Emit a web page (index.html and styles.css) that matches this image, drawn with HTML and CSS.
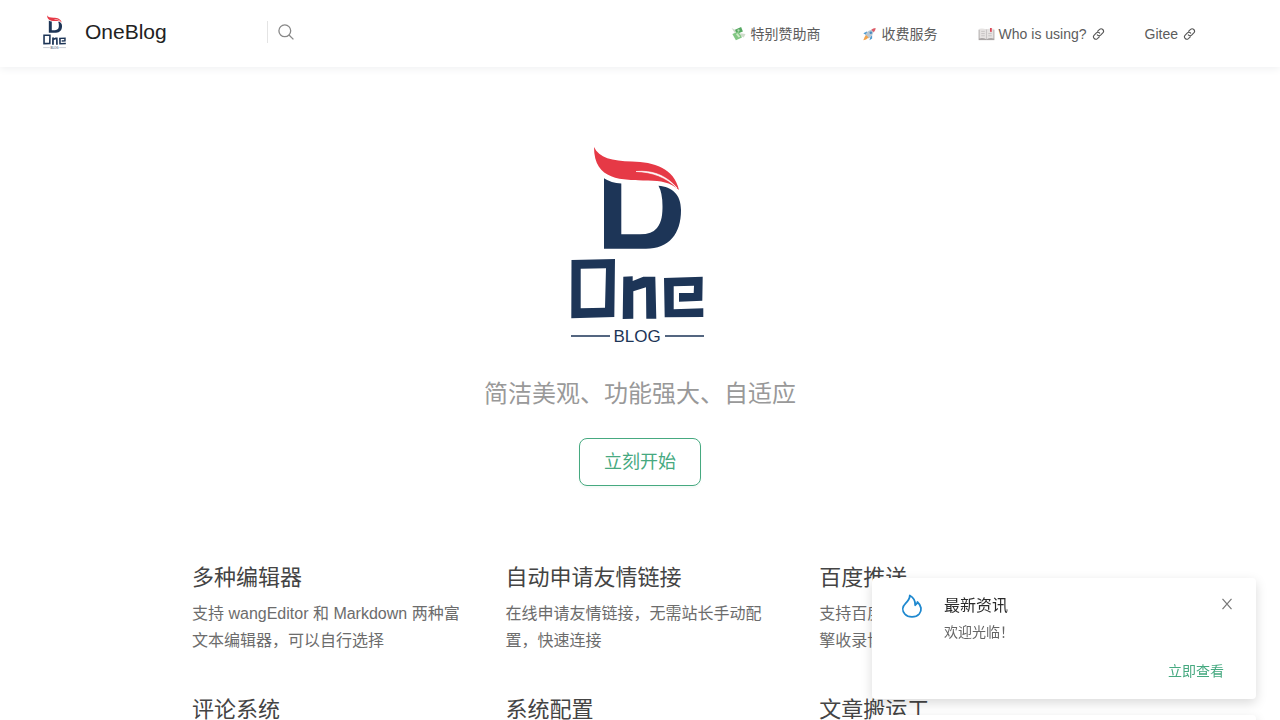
FILE: index.html
```html
<!DOCTYPE html>
<html lang="zh-CN">
   <head>
      <meta charset="UTF-8">
      <meta name="viewport" content="width=device-width, initial-scale=1.0">
      <title>OneBlog</title>
      <link rel="stylesheet" href="styles.css">
   </head>
   <body>
      <!-- Shared icons -->
      <svg class="sprite" aria-hidden="true">
         <symbol id="link" viewBox="0 0 12 12">
            <path fill="none" stroke="#555" stroke-width="1.100" stroke-linecap="round" d="M5.200 3.200L7.100 1.400C9.200-.5 12.300 2.500 10.500 4.700L8.400 6.900C7.300 8 5.700 7.900 4.800 6.900M6.800 8.800L4.900 10.600C2.800 12.500-.3 9.500 1.500 7.300L3.600 5.100C4.700 4 6.300 4.100 7.200 5.100"/>
         </symbol>
      </svg>

      <header class="navbar">
         <a class="brand" href="#">
            <svg class="brand-logo" viewBox="0 0 160 210"><use href="#logo"/></svg>
            <span>OneBlog</span>
         </a>
         <button class="search" aria-label="搜索">
            <svg width="16" height="16" viewBox="0 0 16 16" fill="none" stroke="#888" stroke-width="1.300"><circle cx="6.800" cy="6.800" r="5.900"/><path d="M11 11L15.400 15.400"/></svg>
         </button>
         <nav class="nav">
            <a href="#">
               <svg class="emoji" viewBox="0 0 16 16">
                  <path fill="#cfdccb" d="M0 1L6 4L4 7ZM10 7L16 8L14 12L10 10Z"/>
                  <path fill="#55a861" d="M4 3L11 0L13 5L6 8Z"/>
                  <path fill="#82c784" d="M1 8L8 5L12 12L5 15Z"/>
                  <path fill="#cde8c5" d="M5 8L7 7L10 11L8 12Z"/>
                  <circle cx="8" cy="4" r="1.300" fill="#b6ddb2"/>
               </svg>
               特别赞助商
            </a>
            <a href="#">
               <svg class="emoji" viewBox="0 0 16 16">
                  <path fill="#4e9bd1" d="M1 7L5 5L7 7L4 9ZM9 11L11 9L11 13L8 15Z"/>
                  <path fill="#b9c7d3" d="M3 9Q6 3 12 3L13 4Q12 10 7 13Z"/>
                  <path fill="#dc5a66" d="M10 3Q12 1 15 1Q15 4 13 6Z"/>
                  <circle cx="9.500" cy="6.500" r="1.400" fill="#458bc0"/>
                  <path fill="#f2a34c" d="M4 9L7 12Q4 15 1 15Q2 11 4 9Z"/>
               </svg>
               收费服务
            </a>
            <a href="#">
               <svg class="emoji" viewBox="0 0 18 16">
                  <path fill="#a9a5a5" d="M0 3H18V15H0Z"/>
                  <path fill="#e6e3e2" d="M1 2Q5 1 9 3Q13 1 17 2V13Q13 12 9 14Q5 12 1 13Z"/>
                  <path fill="none" stroke="#c4c0c0" d="M9 3V14M3 5H7M3 7.500H7M3 10H7M11 7.500H15M11 10H15"/>
                  <path fill="#dc4656" d="M13 1H15V6L14 5L13 6Z"/>
               </svg>
               Who is using?
               <svg class="link-icon"><use href="#link"/></svg>
            </a>
            <a href="#">Gitee <svg class="link-icon"><use href="#link"/></svg></a>
         </nav>
      </header>

      <main>
         <section class="hero">
            <svg class="hero-logo" viewBox="0 0 160 210">
               <g id="logo">
                  <path fill="#e63946" d="M34 7C39 18 52 21 72 21.500C94 22 114 28 119 50C110 42 101 41 88 40.500C62 40 34 41 34 7Z"/>
                  <path fill="#fff" d="M76 31.500C92 30 106 35 117 48C106 37 92 32 76 31.500Z" stroke="#fff" stroke-width=".6"/>
                  <path fill="#1d3557" d="M44 38.300Q51 43 61.300 43.500V94.300H80Q92 94.300 97 88C102 82 102.500 73 102.500 66Q102.500 53 98.500 45.700C112 47 121 54 121 70C121 94 109 108.700 86 108.700H44Z"/>
                  <path fill="#1d3557" fill-rule="evenodd" d="M11.500 120L55 119L54.300 177L11.300 178.300ZM20.700 128.700V168.300L45 167.700L46 128.300Z"/>
                  <path fill="#1d3557" d="M63.300 136.700L72.700 136.300V141L83.300 136.700H95.300L96.300 178.700H86.300L86 147.300L73.300 151.300V178.700L62.700 179ZM104 138L142.700 136.700L142.300 160.700L119 161.700V153H133.700L134 145.700L113.700 146.300V169.300L143.300 168.300V177L104.700 177.300Z"/>
                  <path stroke="#1d3557" stroke-width="1.400" d="M11 196H50M105 196H144"/>
                  <text x="77" y="202" text-anchor="middle" font-size="17" fill="#1d3557">BLOG</text>
               </g>
            </svg>
            <p class="description">简洁美观、功能强大、自适应</p>
            <a class="action" href="#">立刻开始</a>
         </section>

         <section class="features">
            <div class="feature">
               <h2>多种编辑器</h2>
               <p>支持 wangEditor 和 Markdown 两种富文本编辑器，可以自行选择</p>
            </div>
            <div class="feature">
               <h2>自动申请友情链接</h2>
               <p>在线申请友情链接，无需站长手动配置，快速连接</p>
            </div>
            <div class="feature">
               <h2>百度推送</h2>
               <p>支持百度推送功能，加速百度搜索引擎收录博客文章</p>
            </div>
            <div class="feature">
               <h2>评论系统</h2>
            </div>
            <div class="feature">
               <h2>系统配置</h2>
            </div>
            <div class="feature">
               <h2>文章搬运工</h2>
            </div>
         </section>
      </main>

      <aside class="notices">
         <div class="notice">
            <svg class="fire" viewBox="0 0 24 24" fill="none" stroke="#1e88cf" stroke-width="1.800" stroke-linejoin="round"><path d="M9.800 1.500C9.800 5 8 7 5.600 9.300C2.200 12.500 2 16.800 4.800 20C8.300 23.900 15.700 23.900 19.200 20C22.200 16.500 21.500 11.500 17.400 8C17.200 9.600 16.500 10.600 15.200 11.200C15.400 7 13.500 3.500 9.800 1.500Z"/></svg>
            <div class="notice-body">
               <h3>最新资讯</h3>
               <p>欢迎光临！</p>
               <a href="#">立即查看</a>
            </div>
            <button class="close" aria-label="关闭">
               <svg width="10" height="12" viewBox="0 0 10 12" fill="none" stroke="#777" stroke-width="1.200"><path d="M.5 .8L9.500 11.200M9.500 .8L.5 11.200"/></svg>
            </button>
         </div>
         <div class="notice"></div>
      </aside>
   </body>
</html>
```

FILE: styles.css
```css
* {
box-sizing: border-box;
}
body {
margin: 0;
height: 100vh;
overflow: hidden;
font-family: "Liberation Sans", "Noto Sans CJK SC", sans-serif;
color: #333;
background-color: #fff;
}
h2, h3, p {
margin: 0;
font-weight: 400;
}
a {
text-decoration: none;
}
button {
padding: 0;
border: none;
background: none;
cursor: pointer;
}
svg {
flex-shrink: 0;
}
.sprite {
position: absolute;
width: 0;
height: 0;
}
/* Top bar */
.navbar {
display: flex;
align-items: center;
height: 67px;
padding: 0 84px 0 41px;
box-shadow: 0 2px 8px #f0f1f2;
}
.brand {
display: flex;
align-items: center;
gap: 16px;
width: 226px;
padding-bottom: 4px;
font-size: 21px;
color: #222;
}
.brand-logo {
width: 28px;
height: 36px;
}
.search {
display: flex;
align-items: center;
height: 22px;
margin-bottom: 3px;
padding-left: 10px;
border-left: 1px solid #e4e4e4;
}
.nav {
display: flex;
gap: 40px;
margin-left: auto;
font-size: 14px;
line-height: 20px;
}
.nav a {
display: flex;
align-items: center;
gap: 4px;
color: #5c5c5c;
}
.emoji {
width: 17px;
height: 14px;
}
.link-icon {
width: 13px;
height: 12px;
margin-left: 1px;
}
/* Hero */
.hero {
display: flex;
flex-direction: column;
align-items: center;
padding-top: 73px;
}
.hero-logo {
width: 160px;
height: 210px;
}
.description {
margin-top: 26px;
font-size: 24px;
line-height: 36px;
color: #999;
}
.action {
margin-top: 26px;
padding: 0 24px;
border: 1px solid #46a980;
border-radius: 8px;
font-size: 18px;
line-height: 46px;
color: #46a980;
box-shadow: 0 2px 2px #f4faf7;
}
/* Feature list */
.features {
display: grid;
grid-template-columns: repeat(3, 30%);
justify-content: space-between;
row-gap: 40px;
width: 70%;
margin: 76px auto 0;
}
.feature h2 {
font-size: 22px;
line-height: 32px;
color: #444;
}
.feature p {
margin-top: 6px;
font-size: 16px;
line-height: 27px;
color: #6c6c6c;
}
/* Notifications float over the page */
.notices {
position: fixed;
top: 578px;
right: 24px;
display: flex;
flex-direction: column;
gap: 16px;
width: 384px;
}
.notice {
display: flex;
min-height: 121px;
padding: 16px 24px 16px 28px;
border-radius: 4px;
background-color: #fff;
box-shadow: 0 4px 12px rgba(0, 0, 0, 0.15);
}
.fire {
width: 24px;
height: 24px;
}
.notice-body {
display: flex;
flex: 1;
flex-direction: column;
padding-left: 20px;
}
.notice h3 {
font-size: 16px;
line-height: 24px;
color: #2a2a2a;
}
.notice p {
margin-top: 4px;
font-size: 14px;
line-height: 21px;
color: #666;
}
.notice-body a {
align-self: flex-end;
margin-top: 18px;
font-size: 14px;
line-height: 21px;
color: #46a980;
}
.close {
align-self: flex-start;
margin-left: -2px;
padding-top: 4px;
line-height: 12px;
}
```
